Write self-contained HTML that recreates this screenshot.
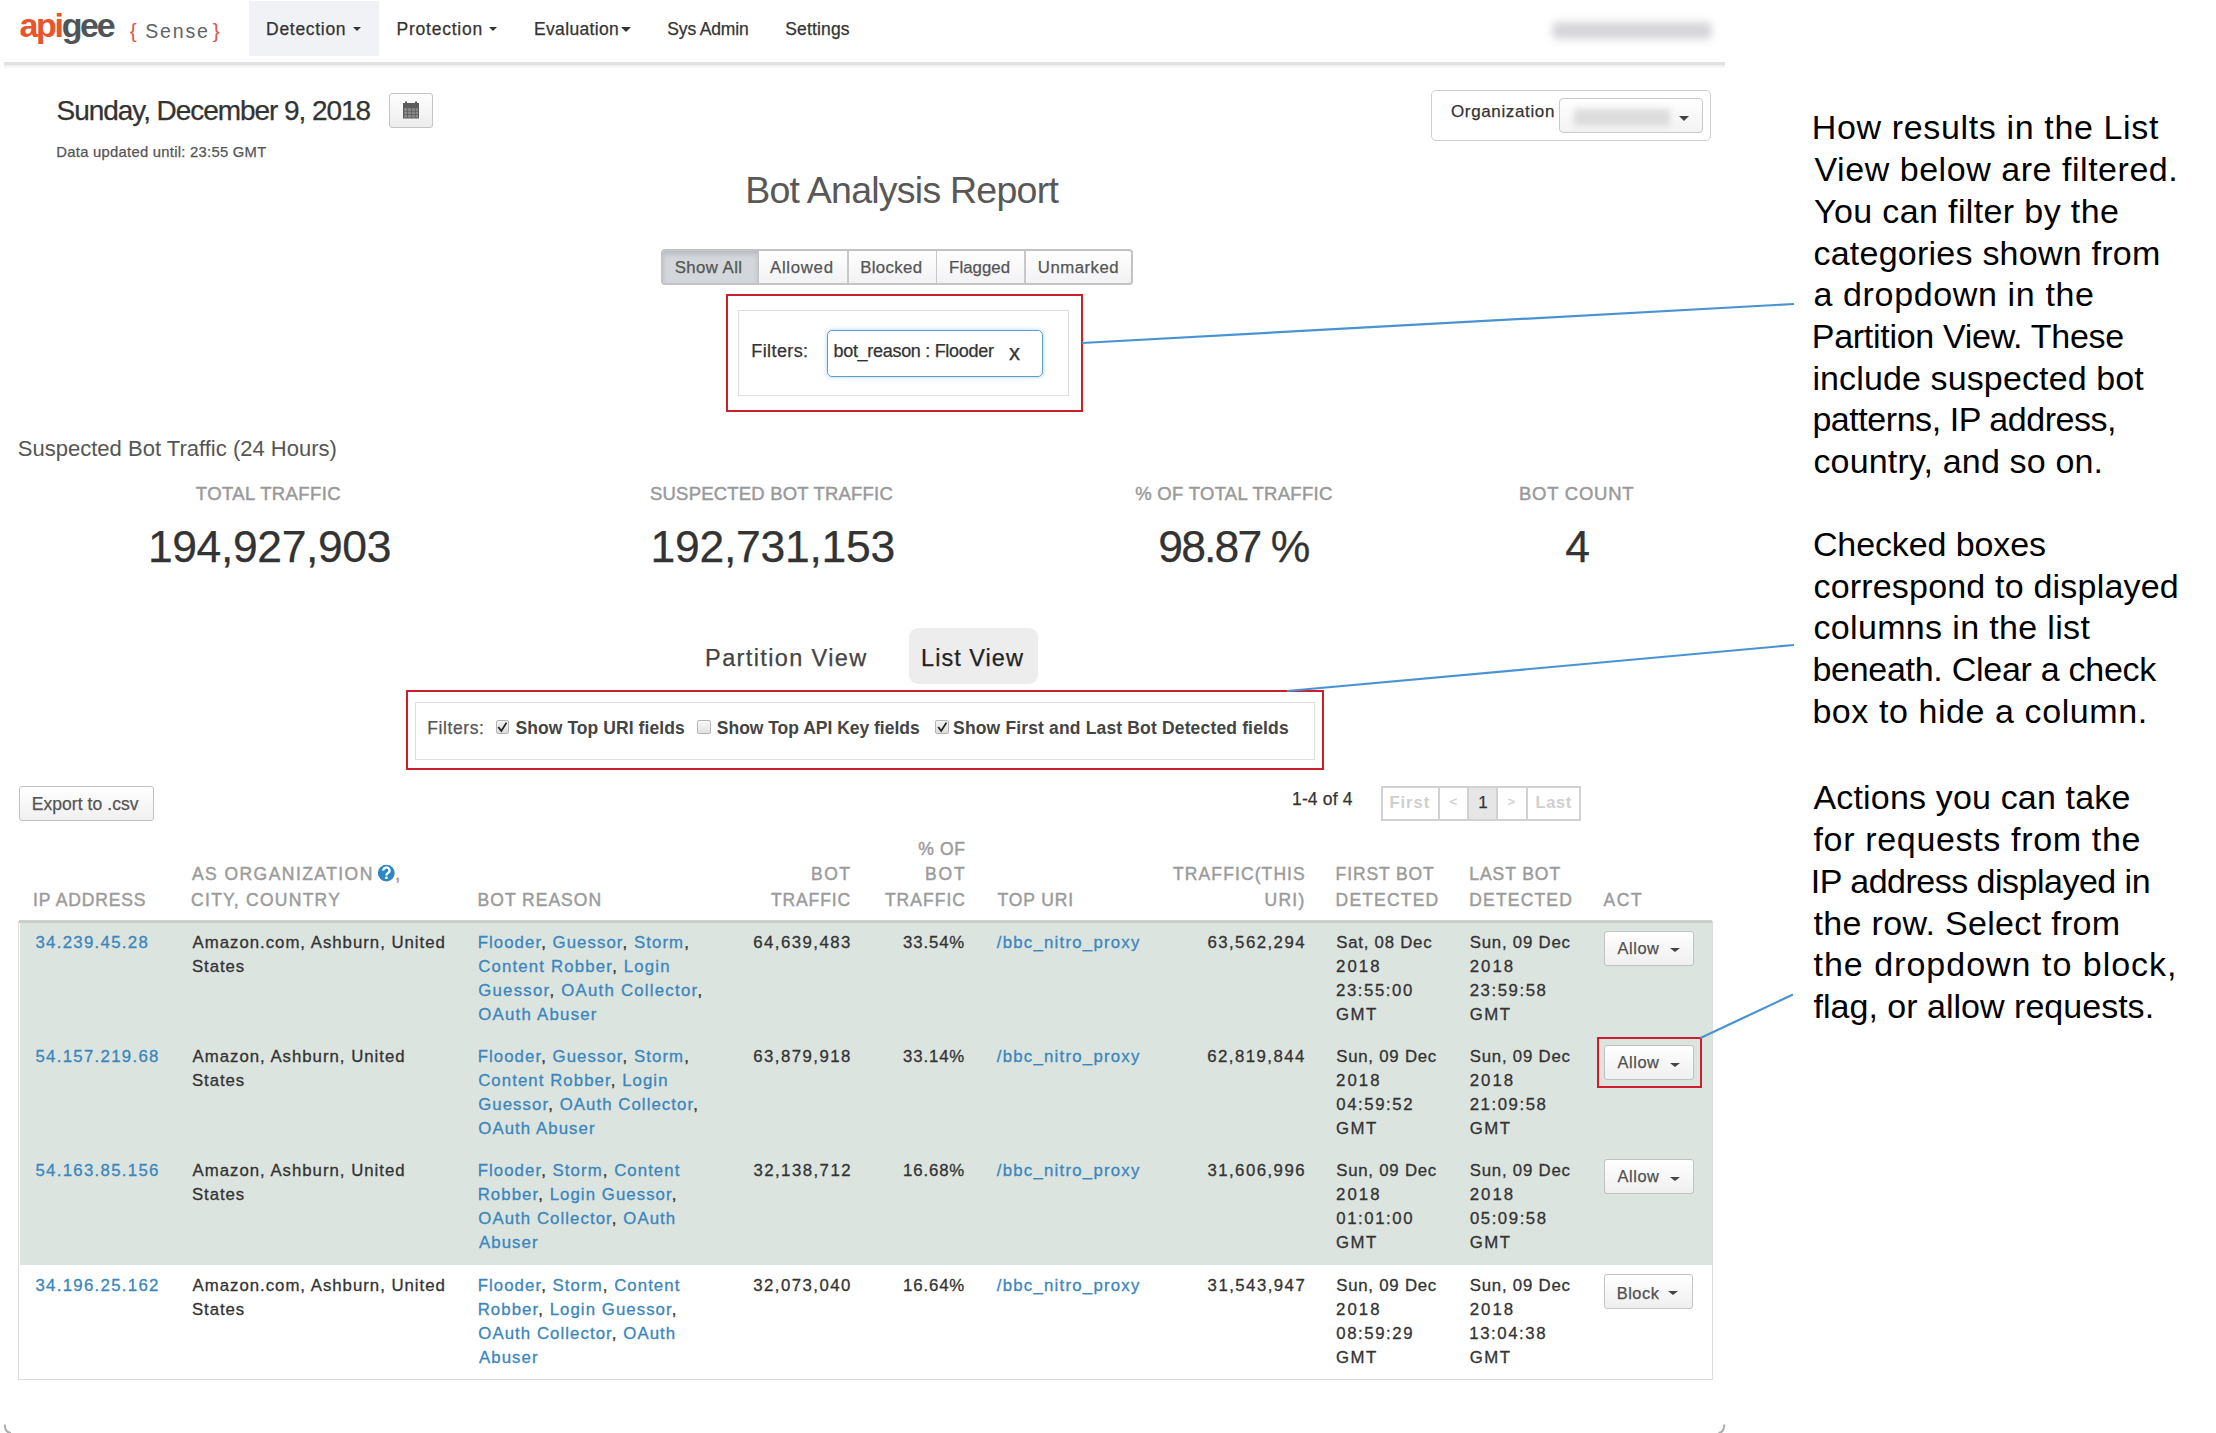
<!DOCTYPE html>
<html><head><meta charset="utf-8"><title>Bot Analysis Report</title>
<style>
html,body{margin:0;padding:0;background:#fff;width:2216px;height:1433px;overflow:hidden;position:relative}
body{font-family:"Liberation Sans",sans-serif}
.t{position:absolute;white-space:pre;line-height:0;font-family:"Liberation Sans",sans-serif}
.a{position:absolute;box-sizing:border-box}
</style></head><body>
<!-- nav -->
<div class="a" style="left:4px;top:0;width:1721px;height:62px;background:#fff"></div>
<div class="a" style="left:4px;top:62px;width:1721px;height:3px;background:#e2e2e2"></div>
<div class="a" style="left:4px;top:65px;width:1721px;height:4px;background:linear-gradient(#ededed,#fff)"></div>
<div class="a" style="left:249px;top:1px;width:130px;height:55px;background:#f0f2f5"></div>
<div class="a" style="left:352.5px;top:27px;width:0;height:0;border-left:4.5px solid transparent;border-right:4.5px solid transparent;border-top:4.5px solid #333"></div>
<div class="a" style="left:489px;top:27px;width:0;height:0;border-left:4.5px solid transparent;border-right:4.5px solid transparent;border-top:4.5px solid #333"></div>
<div class="a" style="left:621px;top:27px;width:0;height:0;border-left:5px solid transparent;border-right:5px solid transparent;border-top:5px solid #333"></div>
<div class="a" style="left:1552px;top:22px;width:160px;height:17px;background:#d5d5d9;filter:blur(4px);border-radius:6px"></div>
<!-- date -->
<div class="a" style="left:389px;top:93px;width:44px;height:35px;border:1px solid #c4c4c4;border-radius:3px;background:linear-gradient(#fff,#ececec)"></div>
<svg class="a" style="left:400px;top:98px" width="24" height="24" viewBox="400 98 24 24">
  <rect x="403" y="103" width="16" height="15.5" fill="#5c5c5c"/>
  <rect x="405" y="101.5" width="2" height="3" fill="#5c5c5c"/>
  <rect x="415" y="101.5" width="2" height="3" fill="#5c5c5c"/>
  <g fill="#8a8a8a">
    <rect x="404.2" y="108.2" width="3" height="2.6"/><rect x="408" y="108.2" width="3" height="2.6"/><rect x="411.8" y="108.2" width="3" height="2.6"/><rect x="415.6" y="108.2" width="2.4" height="2.6"/>
    <rect x="404.2" y="111.6" width="3" height="2.6"/><rect x="408" y="111.6" width="3" height="2.6"/><rect x="411.8" y="111.6" width="3" height="2.6"/><rect x="415.6" y="111.6" width="2.4" height="2.6"/>
    <rect x="404.2" y="115" width="3" height="2.6"/><rect x="408" y="115" width="3" height="2.6"/><rect x="411.8" y="115" width="3" height="2.6"/><rect x="415.6" y="115" width="2.4" height="2.6"/>
  </g>
</svg>
<!-- org -->
<div class="a" style="left:1431px;top:90px;width:280px;height:51px;border:1.5px solid #cfcfcf;border-radius:5px"></div>
<div class="a" style="left:1559px;top:98px;width:144px;height:35px;border:1.5px solid #c9c9c9;border-radius:4px;background:linear-gradient(#fff,#f3f3f3)"></div>
<div class="a" style="left:1574px;top:109px;width:96px;height:17px;background:#dcdcdc;filter:blur(3px)"></div>
<div class="a" style="left:1679px;top:115.5px;width:0;height:0;border-left:5px solid transparent;border-right:5px solid transparent;border-top:5px solid #444"></div>
<!-- btn group -->
<div class="a" style="left:661px;top:249px;width:472px;height:36px;border:2px solid #c3c3c3;border-radius:4px;background:linear-gradient(#fff,#f2f2f4);overflow:hidden">
  <div class="a" style="left:0;top:0;width:95px;height:32px;background:#d3d6da;box-shadow:inset 0 3px 5px rgba(0,0,0,.13)"></div>
  <div class="a" style="left:95px;top:0;width:1px;height:32px;background:#c3c3c3"></div>
  <div class="a" style="left:184px;top:0;width:1.5px;height:32px;background:#c8c8c8"></div>
  <div class="a" style="left:272.5px;top:0;width:1.5px;height:32px;background:#c8c8c8"></div>
  <div class="a" style="left:361px;top:0;width:1.5px;height:32px;background:#c8c8c8"></div>
</div>
<!-- filter box 1 -->
<div class="a" style="left:726px;top:294px;width:357px;height:118px;border:2.2px solid #cc1f2b"></div>
<div class="a" style="left:738px;top:310px;width:331px;height:86px;border:1.5px solid #dedede"></div>
<div class="a" style="left:827px;top:330px;width:216px;height:47px;border:1.8px solid #5f9cc6;border-radius:5px;box-shadow:0 0 4px rgba(102,175,233,.55)"></div>

<!-- list view tab -->
<div class="a" style="left:909px;top:628px;width:129px;height:56px;background:#ededed;border-radius:9px"></div>
<!-- filter box 2 -->
<div class="a" style="left:406px;top:690px;width:918px;height:80px;border:2.2px solid #cc1f2b"></div>
<div class="a" style="left:415px;top:702px;width:900px;height:58px;border:1.5px solid #dedede"></div>
<div class="a" style="left:495.5px;top:720px;width:13.5px;height:13.5px;border:1px solid #b5b5b5;border-radius:2px;background:linear-gradient(#f4f4f4,#dcdcdc)"></div>
<div class="a" style="left:697px;top:720px;width:13.5px;height:13.5px;border:1px solid #b5b5b5;border-radius:2px;background:linear-gradient(#f8f8f8,#e2e2e2)"></div>
<div class="a" style="left:935px;top:720px;width:13.5px;height:13.5px;border:1px solid #b5b5b5;border-radius:2px;background:linear-gradient(#f4f4f4,#dcdcdc)"></div>
<svg class="a" style="left:0;top:0" width="2216" height="1433">
  <path d="M498.3 727 L501.3 731 L506.5 722.6" stroke="#222" stroke-width="1.8" fill="none"/>
  <path d="M938.2 727 L941.2 731 L946.4 722.6" stroke="#222" stroke-width="1.8" fill="none"/>
</svg>
<!-- export & pagination -->
<div class="a" style="left:19px;top:786px;width:135px;height:35px;border:1.5px solid #c2c2c2;border-radius:3px;background:linear-gradient(#fff,#f0f0f0)"></div>
<div class="a" style="left:1381px;top:786px;width:200px;height:35px;border:2px solid #d2d2d2;background:#fff">
  <div class="a" style="left:85px;top:0;width:29px;height:31px;background:#e6e6e6"></div>
  <div class="a" style="left:55px;top:0;width:2px;height:31px;background:#d2d2d2"></div>
  <div class="a" style="left:84px;top:0;width:2px;height:31px;background:#d2d2d2"></div>
  <div class="a" style="left:113px;top:0;width:2px;height:31px;background:#d2d2d2"></div>
  <div class="a" style="left:143px;top:0;width:2px;height:31px;background:#d2d2d2"></div>
</div>
<!-- table -->
<div class="a" style="left:18px;top:921px;width:1695px;height:459px;border:1.5px solid #dcdcdc;border-top:none"></div>
<div class="a" style="left:19px;top:920px;width:1693px;height:2.5px;background:#c9cfcc"></div>
<div class="a" style="left:19.5px;top:922.5px;width:1692.5px;height:342.5px;background:#dce4df"></div>
<svg class="a" style="left:370px;top:857px" width="32" height="32" viewBox="370 857 32 32">
  <circle cx="386.3" cy="873.1" r="8.4" fill="#2c87c4"/>
  <path d="M383.3 870.6 a3.1 3.0 0 1 1 4.6 2.5 c-1.1 .6 -1.5 1.0 -1.5 2.3" stroke="#fff" stroke-width="2.3" fill="none" stroke-linecap="butt"/>
  <rect x="385.2" y="876.6" width="2.4" height="2.4" fill="#fff"/>
</svg>
<!-- act buttons -->
<div class="a" style="left:1604px;top:931px;width:90px;height:35px;border:1.5px solid #bfc3c3;border-radius:3px;background:linear-gradient(#fff,#efefef)"></div>
<div class="a" style="left:1604px;top:1045px;width:90px;height:35px;border:1.5px solid #bfc3c3;border-radius:3px;background:linear-gradient(#fff,#efefef)"></div>
<div class="a" style="left:1604px;top:1159px;width:90px;height:35px;border:1.5px solid #bfc3c3;border-radius:3px;background:linear-gradient(#fff,#efefef)"></div>
<div class="a" style="left:1604px;top:1274px;width:89px;height:35px;border:1.5px solid #c4c4c4;border-radius:3px;background:linear-gradient(#fff,#efefef)"></div>
<div class="a" style="left:1597px;top:1037px;width:104.5px;height:51px;border:2.2px solid #cc1f2b"></div>
<div class="t" style="left:266.10px;top:28.75px;font-size:17.5px;color:#333;letter-spacing:0.688px;-webkit-text-stroke-width:0.25px">Detection</div>
<div class="t" style="left:396.60px;top:28.75px;font-size:17.5px;color:#333;letter-spacing:0.749px;-webkit-text-stroke-width:0.25px">Protection</div>
<div class="t" style="left:534.00px;top:28.75px;font-size:17.5px;color:#333;letter-spacing:0.334px;-webkit-text-stroke-width:0.25px">Evaluation</div>
<div class="t" style="left:667.30px;top:28.75px;font-size:17.5px;color:#333;letter-spacing:-0.151px;-webkit-text-stroke-width:0.25px">Sys Admin</div>
<div class="t" style="left:785.30px;top:28.75px;font-size:17.5px;color:#333;letter-spacing:0.145px;-webkit-text-stroke-width:0.25px">Settings</div>
<div class="t" style="left:19.47px;top:24.90px;font-size:34px;color:#333;letter-spacing:-2.317px;font-weight:700"><span style="color:#e9542c">api</span><span style="color:#4f5459">gee</span></div>
<div class="t" style="left:129.70px;top:31.00px;font-size:21px;color:#e0564a;letter-spacing:0.000px;-webkit-text-stroke-width:0">{</div>
<div class="t" style="left:145.20px;top:30.75px;font-size:19.5px;color:#5d6368;letter-spacing:1.838px;-webkit-text-stroke-width:0">Sense</div>
<div class="t" style="left:212.70px;top:31.00px;font-size:21px;color:#e0564a;letter-spacing:0.000px;-webkit-text-stroke-width:0">}</div>
<div class="t" style="left:56.62px;top:110.75px;font-size:28px;color:#333;letter-spacing:-1.056px;-webkit-text-stroke-width:0.25px">Sunday, December 9, 2018</div>
<div class="t" style="left:56.30px;top:151.90px;font-size:14.8px;color:#555;letter-spacing:0.270px;-webkit-text-stroke-width:0.25px">Data updated until: 23:55 GMT</div>
<div class="t" style="left:1451.00px;top:111.80px;font-size:17px;color:#333;letter-spacing:0.633px;-webkit-text-stroke-width:0.25px">Organization</div>
<div class="t" style="left:745.27px;top:190.40px;font-size:37.5px;color:#585858;letter-spacing:-0.762px;-webkit-text-stroke-width:0">Bot Analysis Report</div>
<div class="t" style="left:674.70px;top:268.00px;font-size:16.8px;color:#555;letter-spacing:0.424px;-webkit-text-stroke-width:0.25px">Show All</div>
<div class="t" style="left:770.00px;top:268.00px;font-size:16.8px;color:#555;letter-spacing:0.702px;-webkit-text-stroke-width:0.25px">Allowed</div>
<div class="t" style="left:860.20px;top:268.00px;font-size:16.8px;color:#555;letter-spacing:0.346px;-webkit-text-stroke-width:0.25px">Blocked</div>
<div class="t" style="left:949.10px;top:268.00px;font-size:16.8px;color:#555;letter-spacing:0.039px;-webkit-text-stroke-width:0.25px">Flagged</div>
<div class="t" style="left:1037.80px;top:268.00px;font-size:16.8px;color:#555;letter-spacing:0.478px;-webkit-text-stroke-width:0.25px">Unmarked</div>
<div class="t" style="left:751.30px;top:351.00px;font-size:18px;color:#333;letter-spacing:0.400px;-webkit-text-stroke-width:0.25px">Filters:</div>
<div class="t" style="left:833.50px;top:351.00px;font-size:18px;color:#333;letter-spacing:-0.301px;-webkit-text-stroke-width:0.25px">bot_reason : Flooder</div>
<div class="t" style="left:1009.00px;top:352.90px;font-size:22px;color:#333;letter-spacing:0.000px;-webkit-text-stroke-width:0.25px">x</div>
<div class="t" style="left:17.80px;top:448.80px;font-size:22px;color:#555;letter-spacing:0.012px;-webkit-text-stroke-width:0">Suspected Bot Traffic (24 Hours)</div>
<div class="t" style="left:195.80px;top:494.30px;font-size:18.5px;color:#999;letter-spacing:0.392px;-webkit-text-stroke:0.45px #999">TOTAL TRAFFIC</div>
<div class="t" style="left:650.00px;top:494.30px;font-size:18.5px;color:#999;letter-spacing:0.199px;-webkit-text-stroke:0.45px #999">SUSPECTED BOT TRAFFIC</div>
<div class="t" style="left:1135.20px;top:494.30px;font-size:18.5px;color:#999;letter-spacing:0.288px;-webkit-text-stroke:0.45px #999">% OF TOTAL TRAFFIC</div>
<div class="t" style="left:1518.90px;top:494.30px;font-size:18.5px;color:#999;letter-spacing:0.758px;-webkit-text-stroke:0.45px #999">BOT COUNT</div>
<div class="t" style="left:147.92px;top:546.90px;font-size:44.5px;color:#333;letter-spacing:-0.398px;-webkit-text-stroke-width:0.25px">194,927,903</div>
<div class="t" style="left:650.62px;top:546.90px;font-size:44.5px;color:#333;letter-spacing:-0.278px;-webkit-text-stroke-width:0.25px">192,731,153</div>
<div class="t" style="left:1158.31px;top:546.90px;font-size:44.5px;color:#333;letter-spacing:-1.880px;-webkit-text-stroke-width:0.25px">98.87 %</div>
<div class="t" style="left:1565.30px;top:546.90px;font-size:44.5px;color:#333;letter-spacing:0.000px;-webkit-text-stroke-width:0.25px">4</div>
<div class="t" style="left:705.10px;top:658.00px;font-size:23.5px;color:#444;letter-spacing:1.371px;-webkit-text-stroke-width:0.25px">Partition View</div>
<div class="t" style="left:921.10px;top:658.00px;font-size:23.5px;color:#222;letter-spacing:1.020px;-webkit-text-stroke-width:0.25px">List View</div>
<div class="t" style="left:427.20px;top:727.60px;font-size:17.5px;color:#555;letter-spacing:0.609px;-webkit-text-stroke-width:0.25px">Filters:</div>
<div class="t" style="left:515.50px;top:727.60px;font-size:17.5px;color:#444;letter-spacing:0.070px;font-weight:700">Show Top URI fields</div>
<div class="t" style="left:716.80px;top:727.60px;font-size:17.5px;color:#444;letter-spacing:-0.015px;font-weight:700">Show Top API Key fields</div>
<div class="t" style="left:953.10px;top:727.60px;font-size:17.5px;color:#444;letter-spacing:0.155px;font-weight:700">Show First and Last Bot Detected fields</div>
<div class="t" style="left:31.70px;top:803.70px;font-size:17.5px;color:#555;letter-spacing:0.065px;-webkit-text-stroke-width:0.25px">Export to .csv</div>
<div class="t" style="left:1292.00px;top:798.70px;font-size:17.5px;color:#333;letter-spacing:0.155px;-webkit-text-stroke-width:0.25px">1-4 of 4</div>
<div class="t" style="left:1389.40px;top:801.90px;font-size:16.5px;color:#cfcfcf;letter-spacing:1.010px;font-weight:700">First</div>
<div class="t" style="left:1449.40px;top:802.00px;font-size:13px;color:#cfcfcf;letter-spacing:0.000px;-webkit-text-stroke-width:0.25px">&lt;</div>
<div class="t" style="left:1478.20px;top:802.90px;font-size:17px;color:#333;letter-spacing:0.000px;-webkit-text-stroke-width:0.25px">1</div>
<div class="t" style="left:1507.40px;top:802.00px;font-size:13px;color:#cfcfcf;letter-spacing:0.000px;-webkit-text-stroke-width:0.25px">&gt;</div>
<div class="t" style="left:1535.60px;top:801.90px;font-size:16.5px;color:#cfcfcf;letter-spacing:0.556px;font-weight:700">Last</div>
<div class="t" style="left:33.00px;top:900.00px;font-size:17.5px;color:#9b9b9b;letter-spacing:0.864px;-webkit-text-stroke:0.45px #9b9b9b">IP ADDRESS</div>
<div class="t" style="left:191.90px;top:874.00px;font-size:17.5px;color:#9b9b9b;letter-spacing:1.452px;-webkit-text-stroke:0.45px #9b9b9b">AS ORGANIZATION</div>
<div class="t" style="left:395.30px;top:874.00px;font-size:17.5px;color:#9b9b9b;letter-spacing:0.000px;-webkit-text-stroke:0.45px #9b9b9b">,</div>
<div class="t" style="left:191.10px;top:900.00px;font-size:17.5px;color:#9b9b9b;letter-spacing:1.269px;-webkit-text-stroke:0.45px #9b9b9b">CITY, COUNTRY</div>
<div class="t" style="left:477.60px;top:900.00px;font-size:17.5px;color:#9b9b9b;letter-spacing:1.000px;-webkit-text-stroke:0.45px #9b9b9b">BOT REASON</div>
<div class="t" style="left:811.10px;top:874.00px;font-size:17.5px;color:#9b9b9b;letter-spacing:1.408px;-webkit-text-stroke:0.45px #9b9b9b">BOT</div>
<div class="t" style="left:770.90px;top:900.00px;font-size:17.5px;color:#9b9b9b;letter-spacing:0.893px;-webkit-text-stroke:0.45px #9b9b9b">TRAFFIC</div>
<div class="t" style="left:918.20px;top:848.50px;font-size:17.5px;color:#9b9b9b;letter-spacing:0.689px;-webkit-text-stroke:0.45px #9b9b9b">% OF</div>
<div class="t" style="left:925.10px;top:874.00px;font-size:17.5px;color:#9b9b9b;letter-spacing:1.808px;-webkit-text-stroke:0.45px #9b9b9b">BOT</div>
<div class="t" style="left:884.90px;top:900.00px;font-size:17.5px;color:#9b9b9b;letter-spacing:1.026px;-webkit-text-stroke:0.45px #9b9b9b">TRAFFIC</div>
<div class="t" style="left:997.50px;top:900.00px;font-size:17.5px;color:#9b9b9b;letter-spacing:0.884px;-webkit-text-stroke:0.45px #9b9b9b">TOP URI</div>
<div class="t" style="left:1173.00px;top:874.00px;font-size:17.5px;color:#9b9b9b;letter-spacing:1.109px;-webkit-text-stroke:0.45px #9b9b9b">TRAFFIC(THIS</div>
<div class="t" style="left:1264.40px;top:900.00px;font-size:17.5px;color:#9b9b9b;letter-spacing:1.354px;-webkit-text-stroke:0.45px #9b9b9b">URI)</div>
<div class="t" style="left:1335.60px;top:874.00px;font-size:17.5px;color:#9b9b9b;letter-spacing:0.888px;-webkit-text-stroke:0.45px #9b9b9b">FIRST BOT</div>
<div class="t" style="left:1335.60px;top:900.00px;font-size:17.5px;color:#9b9b9b;letter-spacing:1.175px;-webkit-text-stroke:0.45px #9b9b9b">DETECTED</div>
<div class="t" style="left:1469.30px;top:874.00px;font-size:17.5px;color:#9b9b9b;letter-spacing:0.927px;-webkit-text-stroke:0.45px #9b9b9b">LAST BOT</div>
<div class="t" style="left:1469.30px;top:900.00px;font-size:17.5px;color:#9b9b9b;letter-spacing:1.175px;-webkit-text-stroke:0.45px #9b9b9b">DETECTED</div>
<div class="t" style="left:1603.40px;top:900.00px;font-size:17.5px;color:#9b9b9b;letter-spacing:1.645px;-webkit-text-stroke:0.45px #9b9b9b">ACT</div>
<div class="t" style="left:35.40px;top:943.00px;font-size:16.8px;color:#3a86bd;letter-spacing:1.305px;-webkit-text-stroke-width:0.3px">34.239.45.28</div>
<div class="t" style="left:192.60px;top:943.00px;font-size:16.8px;color:#333;letter-spacing:0.985px;-webkit-text-stroke-width:0.3px">Amazon.com, Ashburn, United</div>
<div class="t" style="left:191.90px;top:967.00px;font-size:16.8px;color:#333;letter-spacing:0.955px;-webkit-text-stroke-width:0.3px">States</div>
<div class="t" style="left:477.70px;top:943.00px;font-size:16.8px;color:#333;letter-spacing:1.066px;-webkit-text-stroke-width:0.3px"><span style="color:#3a86bd">Flooder</span><span style="color:#333">,</span><span style="color:#3a86bd"> </span><span style="color:#3a86bd">Guessor</span><span style="color:#333">,</span><span style="color:#3a86bd"> </span><span style="color:#3a86bd">Storm</span><span style="color:#333">,</span></div>
<div class="t" style="left:478.20px;top:967.00px;font-size:16.8px;color:#333;letter-spacing:1.171px;-webkit-text-stroke-width:0.3px"><span style="color:#3a86bd">Content Robber</span><span style="color:#333">,</span><span style="color:#3a86bd"> </span><span style="color:#3a86bd">Login</span></div>
<div class="t" style="left:478.20px;top:991.00px;font-size:16.8px;color:#333;letter-spacing:1.243px;-webkit-text-stroke-width:0.3px"><span style="color:#3a86bd">Guessor</span><span style="color:#333">,</span><span style="color:#3a86bd"> </span><span style="color:#3a86bd">OAuth Collector</span><span style="color:#333">,</span></div>
<div class="t" style="left:478.30px;top:1015.00px;font-size:16.8px;color:#333;letter-spacing:1.243px;-webkit-text-stroke-width:0.3px"><span style="color:#3a86bd">OAuth Abuser</span></div>
<div class="t" style="left:753.20px;top:943.00px;font-size:16.8px;color:#333;letter-spacing:1.462px;-webkit-text-stroke-width:0.3px">64,639,483</div>
<div class="t" style="left:903.10px;top:943.00px;font-size:16.8px;color:#333;letter-spacing:0.852px;-webkit-text-stroke-width:0.3px">33.54%</div>
<div class="t" style="left:996.80px;top:943.00px;font-size:16.8px;color:#3a86bd;letter-spacing:1.233px;-webkit-text-stroke-width:0.3px">/bbc_nitro_proxy</div>
<div class="t" style="left:1207.40px;top:943.00px;font-size:16.8px;color:#333;letter-spacing:1.462px;-webkit-text-stroke-width:0.3px">63,562,294</div>
<div class="t" style="left:1336.20px;top:943.00px;font-size:16.8px;color:#333;letter-spacing:0.772px;-webkit-text-stroke-width:0.3px">Sat, 08 Dec</div>
<div class="t" style="left:1336.10px;top:967.00px;font-size:16.8px;color:#333;letter-spacing:2.023px;-webkit-text-stroke-width:0.3px">2018</div>
<div class="t" style="left:1336.10px;top:991.00px;font-size:16.8px;color:#333;letter-spacing:1.550px;-webkit-text-stroke-width:0.3px">23:55:00</div>
<div class="t" style="left:1336.10px;top:1015.00px;font-size:16.8px;color:#333;letter-spacing:1.469px;-webkit-text-stroke-width:0.3px">GMT</div>
<div class="t" style="left:1469.80px;top:943.00px;font-size:16.8px;color:#333;letter-spacing:0.772px;-webkit-text-stroke-width:0.3px">Sun, 09 Dec</div>
<div class="t" style="left:1469.70px;top:967.00px;font-size:16.8px;color:#333;letter-spacing:2.023px;-webkit-text-stroke-width:0.3px">2018</div>
<div class="t" style="left:1469.70px;top:991.00px;font-size:16.8px;color:#333;letter-spacing:1.550px;-webkit-text-stroke-width:0.3px">23:59:58</div>
<div class="t" style="left:1469.70px;top:1015.00px;font-size:16.8px;color:#333;letter-spacing:1.469px;-webkit-text-stroke-width:0.3px">GMT</div>
<div class="t" style="left:35.40px;top:1057.00px;font-size:16.8px;color:#3a86bd;letter-spacing:1.305px;-webkit-text-stroke-width:0.3px">54.157.219.68</div>
<div class="t" style="left:192.60px;top:1057.00px;font-size:16.8px;color:#333;letter-spacing:0.985px;-webkit-text-stroke-width:0.3px">Amazon, Ashburn, United</div>
<div class="t" style="left:191.90px;top:1081.00px;font-size:16.8px;color:#333;letter-spacing:0.955px;-webkit-text-stroke-width:0.3px">States</div>
<div class="t" style="left:477.70px;top:1057.00px;font-size:16.8px;color:#333;letter-spacing:1.066px;-webkit-text-stroke-width:0.3px"><span style="color:#3a86bd">Flooder</span><span style="color:#333">,</span><span style="color:#3a86bd"> </span><span style="color:#3a86bd">Guessor</span><span style="color:#333">,</span><span style="color:#3a86bd"> </span><span style="color:#3a86bd">Storm</span><span style="color:#333">,</span></div>
<div class="t" style="left:478.20px;top:1081.00px;font-size:16.8px;color:#333;letter-spacing:1.066px;-webkit-text-stroke-width:0.3px"><span style="color:#3a86bd">Content Robber</span><span style="color:#333">,</span><span style="color:#3a86bd"> </span><span style="color:#3a86bd">Login</span></div>
<div class="t" style="left:478.20px;top:1105.00px;font-size:16.8px;color:#333;letter-spacing:1.066px;-webkit-text-stroke-width:0.3px"><span style="color:#3a86bd">Guessor</span><span style="color:#333">,</span><span style="color:#3a86bd"> </span><span style="color:#3a86bd">OAuth Collector</span><span style="color:#333">,</span></div>
<div class="t" style="left:478.30px;top:1129.00px;font-size:16.8px;color:#333;letter-spacing:1.066px;-webkit-text-stroke-width:0.3px"><span style="color:#3a86bd">OAuth Abuser</span></div>
<div class="t" style="left:753.20px;top:1057.00px;font-size:16.8px;color:#333;letter-spacing:1.462px;-webkit-text-stroke-width:0.3px">63,879,918</div>
<div class="t" style="left:903.10px;top:1057.00px;font-size:16.8px;color:#333;letter-spacing:0.852px;-webkit-text-stroke-width:0.3px">33.14%</div>
<div class="t" style="left:996.80px;top:1057.00px;font-size:16.8px;color:#3a86bd;letter-spacing:1.233px;-webkit-text-stroke-width:0.3px">/bbc_nitro_proxy</div>
<div class="t" style="left:1207.20px;top:1057.00px;font-size:16.8px;color:#333;letter-spacing:1.462px;-webkit-text-stroke-width:0.3px">62,819,844</div>
<div class="t" style="left:1336.20px;top:1057.00px;font-size:16.8px;color:#333;letter-spacing:0.772px;-webkit-text-stroke-width:0.3px">Sun, 09 Dec</div>
<div class="t" style="left:1336.10px;top:1081.00px;font-size:16.8px;color:#333;letter-spacing:2.023px;-webkit-text-stroke-width:0.3px">2018</div>
<div class="t" style="left:1336.30px;top:1105.00px;font-size:16.8px;color:#333;letter-spacing:1.550px;-webkit-text-stroke-width:0.3px">04:59:52</div>
<div class="t" style="left:1336.10px;top:1129.00px;font-size:16.8px;color:#333;letter-spacing:1.469px;-webkit-text-stroke-width:0.3px">GMT</div>
<div class="t" style="left:1469.80px;top:1057.00px;font-size:16.8px;color:#333;letter-spacing:0.772px;-webkit-text-stroke-width:0.3px">Sun, 09 Dec</div>
<div class="t" style="left:1469.70px;top:1081.00px;font-size:16.8px;color:#333;letter-spacing:2.023px;-webkit-text-stroke-width:0.3px">2018</div>
<div class="t" style="left:1469.70px;top:1105.00px;font-size:16.8px;color:#333;letter-spacing:1.550px;-webkit-text-stroke-width:0.3px">21:09:58</div>
<div class="t" style="left:1469.70px;top:1129.00px;font-size:16.8px;color:#333;letter-spacing:1.469px;-webkit-text-stroke-width:0.3px">GMT</div>
<div class="t" style="left:35.40px;top:1171.00px;font-size:16.8px;color:#3a86bd;letter-spacing:1.305px;-webkit-text-stroke-width:0.3px">54.163.85.156</div>
<div class="t" style="left:192.60px;top:1171.00px;font-size:16.8px;color:#333;letter-spacing:0.985px;-webkit-text-stroke-width:0.3px">Amazon, Ashburn, United</div>
<div class="t" style="left:191.90px;top:1195.00px;font-size:16.8px;color:#333;letter-spacing:0.955px;-webkit-text-stroke-width:0.3px">States</div>
<div class="t" style="left:477.70px;top:1171.00px;font-size:16.8px;color:#333;letter-spacing:1.066px;-webkit-text-stroke-width:0.3px"><span style="color:#3a86bd">Flooder</span><span style="color:#333">,</span><span style="color:#3a86bd"> </span><span style="color:#3a86bd">Storm</span><span style="color:#333">,</span><span style="color:#3a86bd"> </span><span style="color:#3a86bd">Content</span></div>
<div class="t" style="left:477.70px;top:1195.00px;font-size:16.8px;color:#333;letter-spacing:1.066px;-webkit-text-stroke-width:0.3px"><span style="color:#3a86bd">Robber</span><span style="color:#333">,</span><span style="color:#3a86bd"> </span><span style="color:#3a86bd">Login Guessor</span><span style="color:#333">,</span></div>
<div class="t" style="left:478.30px;top:1219.00px;font-size:16.8px;color:#333;letter-spacing:1.066px;-webkit-text-stroke-width:0.3px"><span style="color:#3a86bd">OAuth Collector</span><span style="color:#333">,</span><span style="color:#3a86bd"> </span><span style="color:#3a86bd">OAuth</span></div>
<div class="t" style="left:479.00px;top:1243.00px;font-size:16.8px;color:#333;letter-spacing:1.066px;-webkit-text-stroke-width:0.3px"><span style="color:#3a86bd">Abuser</span></div>
<div class="t" style="left:753.40px;top:1171.00px;font-size:16.8px;color:#333;letter-spacing:1.462px;-webkit-text-stroke-width:0.3px">32,138,712</div>
<div class="t" style="left:903.10px;top:1171.00px;font-size:16.8px;color:#333;letter-spacing:0.852px;-webkit-text-stroke-width:0.3px">16.68%</div>
<div class="t" style="left:996.80px;top:1171.00px;font-size:16.8px;color:#3a86bd;letter-spacing:1.233px;-webkit-text-stroke-width:0.3px">/bbc_nitro_proxy</div>
<div class="t" style="left:1207.40px;top:1171.00px;font-size:16.8px;color:#333;letter-spacing:1.462px;-webkit-text-stroke-width:0.3px">31,606,996</div>
<div class="t" style="left:1336.20px;top:1171.00px;font-size:16.8px;color:#333;letter-spacing:0.772px;-webkit-text-stroke-width:0.3px">Sun, 09 Dec</div>
<div class="t" style="left:1336.10px;top:1195.00px;font-size:16.8px;color:#333;letter-spacing:2.023px;-webkit-text-stroke-width:0.3px">2018</div>
<div class="t" style="left:1336.30px;top:1219.00px;font-size:16.8px;color:#333;letter-spacing:1.550px;-webkit-text-stroke-width:0.3px">01:01:00</div>
<div class="t" style="left:1336.10px;top:1243.00px;font-size:16.8px;color:#333;letter-spacing:1.469px;-webkit-text-stroke-width:0.3px">GMT</div>
<div class="t" style="left:1469.80px;top:1171.00px;font-size:16.8px;color:#333;letter-spacing:0.772px;-webkit-text-stroke-width:0.3px">Sun, 09 Dec</div>
<div class="t" style="left:1469.70px;top:1195.00px;font-size:16.8px;color:#333;letter-spacing:2.023px;-webkit-text-stroke-width:0.3px">2018</div>
<div class="t" style="left:1469.90px;top:1219.00px;font-size:16.8px;color:#333;letter-spacing:1.550px;-webkit-text-stroke-width:0.3px">05:09:58</div>
<div class="t" style="left:1469.70px;top:1243.00px;font-size:16.8px;color:#333;letter-spacing:1.469px;-webkit-text-stroke-width:0.3px">GMT</div>
<div class="t" style="left:35.40px;top:1286.00px;font-size:16.8px;color:#3a86bd;letter-spacing:1.305px;-webkit-text-stroke-width:0.3px">34.196.25.162</div>
<div class="t" style="left:192.60px;top:1286.00px;font-size:16.8px;color:#333;letter-spacing:0.985px;-webkit-text-stroke-width:0.3px">Amazon.com, Ashburn, United</div>
<div class="t" style="left:191.90px;top:1310.00px;font-size:16.8px;color:#333;letter-spacing:0.955px;-webkit-text-stroke-width:0.3px">States</div>
<div class="t" style="left:477.70px;top:1286.00px;font-size:16.8px;color:#333;letter-spacing:1.066px;-webkit-text-stroke-width:0.3px"><span style="color:#3a86bd">Flooder</span><span style="color:#333">,</span><span style="color:#3a86bd"> </span><span style="color:#3a86bd">Storm</span><span style="color:#333">,</span><span style="color:#3a86bd"> </span><span style="color:#3a86bd">Content</span></div>
<div class="t" style="left:477.70px;top:1310.00px;font-size:16.8px;color:#333;letter-spacing:1.066px;-webkit-text-stroke-width:0.3px"><span style="color:#3a86bd">Robber</span><span style="color:#333">,</span><span style="color:#3a86bd"> </span><span style="color:#3a86bd">Login Guessor</span><span style="color:#333">,</span></div>
<div class="t" style="left:478.30px;top:1334.00px;font-size:16.8px;color:#333;letter-spacing:1.066px;-webkit-text-stroke-width:0.3px"><span style="color:#3a86bd">OAuth Collector</span><span style="color:#333">,</span><span style="color:#3a86bd"> </span><span style="color:#3a86bd">OAuth</span></div>
<div class="t" style="left:479.00px;top:1358.00px;font-size:16.8px;color:#333;letter-spacing:1.066px;-webkit-text-stroke-width:0.3px"><span style="color:#3a86bd">Abuser</span></div>
<div class="t" style="left:753.20px;top:1286.00px;font-size:16.8px;color:#333;letter-spacing:1.462px;-webkit-text-stroke-width:0.3px">32,073,040</div>
<div class="t" style="left:903.10px;top:1286.00px;font-size:16.8px;color:#333;letter-spacing:0.852px;-webkit-text-stroke-width:0.3px">16.64%</div>
<div class="t" style="left:996.80px;top:1286.00px;font-size:16.8px;color:#3a86bd;letter-spacing:1.233px;-webkit-text-stroke-width:0.3px">/bbc_nitro_proxy</div>
<div class="t" style="left:1207.60px;top:1286.00px;font-size:16.8px;color:#333;letter-spacing:1.462px;-webkit-text-stroke-width:0.3px">31,543,947</div>
<div class="t" style="left:1336.20px;top:1286.00px;font-size:16.8px;color:#333;letter-spacing:0.772px;-webkit-text-stroke-width:0.3px">Sun, 09 Dec</div>
<div class="t" style="left:1336.10px;top:1310.00px;font-size:16.8px;color:#333;letter-spacing:2.023px;-webkit-text-stroke-width:0.3px">2018</div>
<div class="t" style="left:1336.30px;top:1334.00px;font-size:16.8px;color:#333;letter-spacing:1.550px;-webkit-text-stroke-width:0.3px">08:59:29</div>
<div class="t" style="left:1336.10px;top:1358.00px;font-size:16.8px;color:#333;letter-spacing:1.469px;-webkit-text-stroke-width:0.3px">GMT</div>
<div class="t" style="left:1469.80px;top:1286.00px;font-size:16.8px;color:#333;letter-spacing:0.772px;-webkit-text-stroke-width:0.3px">Sun, 09 Dec</div>
<div class="t" style="left:1469.70px;top:1310.00px;font-size:16.8px;color:#333;letter-spacing:2.023px;-webkit-text-stroke-width:0.3px">2018</div>
<div class="t" style="left:1469.30px;top:1334.00px;font-size:16.8px;color:#333;letter-spacing:1.550px;-webkit-text-stroke-width:0.3px">13:04:38</div>
<div class="t" style="left:1469.70px;top:1358.00px;font-size:16.8px;color:#333;letter-spacing:1.469px;-webkit-text-stroke-width:0.3px">GMT</div>
<div class="t" style="left:1617.60px;top:948.40px;font-size:16.4px;color:#505050;letter-spacing:0.538px;-webkit-text-stroke-width:0.25px">Allow</div>
<div class="t" style="left:1617.60px;top:1062.40px;font-size:16.4px;color:#505050;letter-spacing:0.538px;-webkit-text-stroke-width:0.25px">Allow</div>
<div class="t" style="left:1617.60px;top:1176.40px;font-size:16.4px;color:#505050;letter-spacing:0.538px;-webkit-text-stroke-width:0.25px">Allow</div>
<div class="t" style="left:1616.70px;top:1292.50px;font-size:16.4px;color:#505050;letter-spacing:0.524px;-webkit-text-stroke-width:0.25px">Block</div>
<div class="t" style="left:1811.84px;top:127.40px;font-size:34px;color:#000;letter-spacing:0.635px">How results in the List</div>
<div class="t" style="left:1814.50px;top:169.10px;font-size:34px;color:#000;letter-spacing:0.538px">View below are filtered.</div>
<div class="t" style="left:1813.97px;top:210.80px;font-size:34px;color:#000;letter-spacing:0.376px">You can filter by the</div>
<div class="t" style="left:1813.44px;top:252.50px;font-size:34px;color:#000;letter-spacing:0.239px">categories shown from</div>
<div class="t" style="left:1813.44px;top:294.20px;font-size:34px;color:#000;letter-spacing:0.640px">a dropdown in the</div>
<div class="t" style="left:1811.84px;top:335.90px;font-size:34px;color:#000;letter-spacing:-0.292px">Partition View. These</div>
<div class="t" style="left:1812.38px;top:377.60px;font-size:34px;color:#000;letter-spacing:0.126px">include suspected bot</div>
<div class="t" style="left:1812.38px;top:419.30px;font-size:34px;color:#000;letter-spacing:-0.448px">patterns, IP address,</div>
<div class="t" style="left:1813.44px;top:461.00px;font-size:34px;color:#000;letter-spacing:0.165px">country, and so on.</div>
<div class="t" style="left:1812.91px;top:544.00px;font-size:34px;color:#000;letter-spacing:-0.109px">Checked boxes</div>
<div class="t" style="left:1813.44px;top:585.70px;font-size:34px;color:#000;letter-spacing:0.194px">correspond to displayed</div>
<div class="t" style="left:1813.44px;top:627.40px;font-size:34px;color:#000;letter-spacing:0.346px">columns in the list</div>
<div class="t" style="left:1812.38px;top:669.10px;font-size:34px;color:#000;letter-spacing:-0.275px">beneath. Clear a check</div>
<div class="t" style="left:1812.38px;top:710.80px;font-size:34px;color:#000;letter-spacing:0.575px">box to hide a column.</div>
<div class="t" style="left:1813.50px;top:797.40px;font-size:34px;color:#000;letter-spacing:0.165px">Actions you can take</div>
<div class="t" style="left:1813.50px;top:839.10px;font-size:34px;color:#000;letter-spacing:0.660px">for requests from the</div>
<div class="t" style="left:1810.84px;top:880.80px;font-size:34px;color:#000;letter-spacing:-0.508px">IP address displayed in</div>
<div class="t" style="left:1813.50px;top:922.50px;font-size:34px;color:#000;letter-spacing:0.327px">the row. Select from</div>
<div class="t" style="left:1813.50px;top:964.20px;font-size:34px;color:#000;letter-spacing:0.997px">the dropdown to block,</div>
<div class="t" style="left:1813.50px;top:1005.90px;font-size:34px;color:#000;letter-spacing:0.018px">flag, or allow requests.</div>
<div class="a" style="left:1669.5px;top:948px;width:0;height:0;border-left:5px solid transparent;border-right:5px solid transparent;border-top:4.5px solid #444"></div>
<div class="a" style="left:1669.5px;top:1062.5px;width:0;height:0;border-left:5px solid transparent;border-right:5px solid transparent;border-top:4.5px solid #444"></div>
<div class="a" style="left:1669.5px;top:1176.5px;width:0;height:0;border-left:5px solid transparent;border-right:5px solid transparent;border-top:4.5px solid #444"></div>
<div class="a" style="left:1668px;top:1291px;width:0;height:0;border-left:5px solid transparent;border-right:5px solid transparent;border-top:4.5px solid #444"></div>
<!-- annotation lines -->
<svg class="a" style="left:0;top:0" width="2216" height="1433">
  <line x1="1082" y1="343" x2="1794" y2="304" stroke="#4a93d3" stroke-width="2.2"/>
  <line x1="1287" y1="691" x2="1794" y2="645" stroke="#4a93d3" stroke-width="2.2"/>
  <line x1="1700.5" y1="1038" x2="1793" y2="994.5" stroke="#4a93d3" stroke-width="2.2"/>
</svg>
<svg class="a" style="left:0;top:1415px" width="1740" height="18" viewBox="0 1415 1740 18">
  <path d="M4.8 1424.5 Q4.8 1432.5 11 1433" stroke="#8a8a8a" stroke-width="2" fill="none" opacity=".7"/>
  <path d="M1724.2 1424.5 Q1724.2 1432.5 1718.5 1433" stroke="#8a8a8a" stroke-width="2" fill="none" opacity=".7"/>
</svg>
</body></html>
